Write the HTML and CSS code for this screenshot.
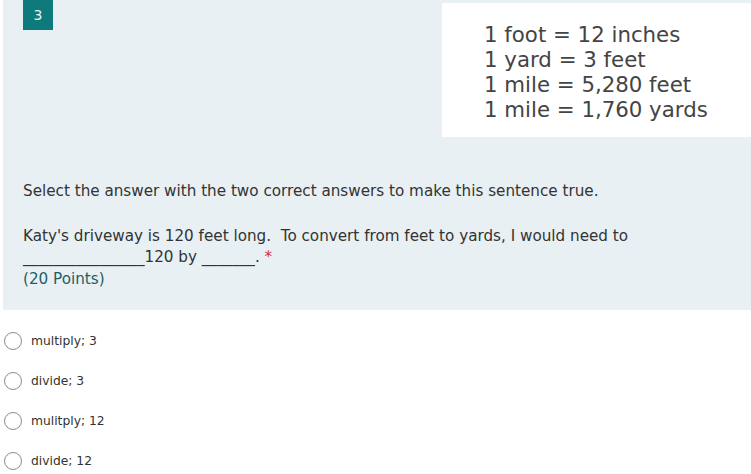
FILE: index.html
```html
<!DOCTYPE html>
<html>
<head>
<meta charset="utf-8">
<link rel="stylesheet" href="styles.css">
</head>
<body>
<div class="page">
  <section class="question">
    <div class="top">
      <div class="badge">3</div>
      <div class="figure">
        <div class="fig-line">1 foot = 12 inches</div>
        <div class="fig-line">1 yard = 3 feet</div>
        <div class="fig-line">1 mile = 5,280 feet</div>
        <div class="fig-line">1 mile = 1,760 yards</div>
      </div>
    </div>
    <div class="prompt">
      <p class="line">Select the answer with the two correct answers to make this sentence true.</p>
      <p class="line gap">Katy's driveway is 120 feet long.&nbsp; To convert from feet to yards, I would need to</p>
      <p class="line">________________120 by _______. <span class="req">*</span></p>
      <p class="line points">(20 Points)</p>
    </div>
  </section>
  <ul class="options">
    <li class="option"><span class="radio"></span><span class="opt-text">multiply; 3</span></li>
    <li class="option"><span class="radio"></span><span class="opt-text">divide; 3</span></li>
    <li class="option"><span class="radio"></span><span class="opt-text">mulitply; 12</span></li>
    <li class="option"><span class="radio"></span><span class="opt-text">divide; 12</span></li>
  </ul>
</div>
</body>
</html>
```
FILE: styles.css
```css
* { box-sizing: border-box; }
html, body { margin: 0; padding: 0; background: #ffffff; }
body { font-family: "DejaVu Sans", Verdana, sans-serif; color: #333333; width: 751px; height: 474px; overflow: hidden; }
.page { padding-left: 3px; }
.question { background: #e8f0f3; height: 310px; padding: 0 0 0 20px; }
.top { display: flex; justify-content: space-between; align-items: flex-start; height: 181px; }
.badge { width: 30px; height: 30px; background: #0f7a7c; color: #e6f4f4; font-size: 14px; display: flex; align-items: center; justify-content: center; }
.figure { margin-top: 3px; width: 309px; height: 134px; background: #ffffff; padding: 19px 0 0 42px; font-size: 21.3px; line-height: 25px; color: #444444; }
.prompt { font-size: 15.2px; line-height: 21.5px; }
.line { margin: 0; white-space: nowrap; }
.gap { margin-top: 23px; }
.req { color: #c8343a; }
.points { color: #1f5e66; }
.options { list-style: none; margin: 0; padding: 11px 0 0 0; }
.option { display: flex; align-items: center; height: 40px; }
.radio { width: 18px; height: 18px; border: 1px solid #8a8a8a; border-radius: 50%; margin-left: 1px; background: #fff; }
.opt-text { margin-left: 9px; font-size: 12.3px; color: #333333; }
```
